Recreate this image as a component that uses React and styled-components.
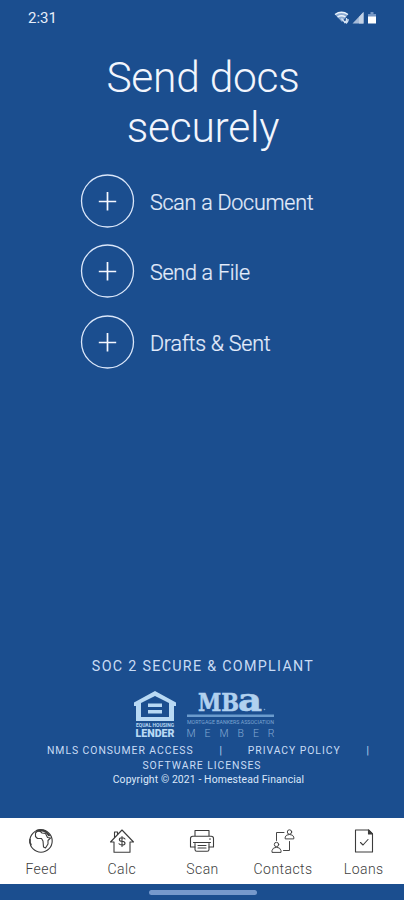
import React from "react";
import styled, { createGlobalStyle } from "styled-components";

const GlobalStyle = createGlobalStyle`
  * { box-sizing: border-box; }
  html, body { margin: 0; padding: 0; background: #1b4e8f; }
  body { font-family: Roboto, "Noto Sans", sans-serif; }
`;

const Screen = styled.div`
  width: 100%;
  max-width: 404px;
  height: 900px;
  display: flex;
  flex-direction: column;
  overflow: hidden;
  background: #1b4e8f;
  color: #f2f5fd;
`;

const StatusBar = styled.header`
  height: 36px;
  flex: none;
  display: flex;
  align-items: center;
  justify-content: space-between;
  padding: 0 25px 0 28px;
`;

const Clock = styled.time`
  font-size: 15px;
  line-height: 18px;
  color: #e6edfa;
`;

const StatusIcons = styled.svg`
  width: 46px;
  height: 16px;
`;

const Title = styled.h1`
  margin: 17px 0 0;
  padding-left: 2px;
  font-size: 42.5px;
  line-height: 50px;
  font-weight: 300;
  text-align: center;
  letter-spacing: -0.25px;
`;

const Actions = styled.nav`
  display: flex;
  flex-direction: column;
  gap: 16px;
  padding: 21px 0 0 80px;
`;

const Action = styled.button`
  display: flex;
  align-items: center;
  gap: 15px;
  height: 54.5px;
  padding: 0;
  border: 0;
  background: none;
  color: #e4ecfb;
  font: 300 21.5px/26px Roboto, sans-serif;
  letter-spacing: -0.25px;
`;

const ActionLabel = styled.span`
  padding-top: 3px;
  -webkit-text-stroke: 0.2px currentColor;
`;

const PlusCircle = styled.svg`
  width: 55px;
  height: 55px;
  flex: none;
`;

const Footer = styled.footer`
  margin-top: auto;
  height: 161px;
  flex: none;
  display: flex;
  flex-direction: column;
  align-items: center;
  color: #c9dcf5;
`;

const Compliance = styled.p`
  margin: 0;
  padding-left: 2px;
  font-size: 14.3px;
  line-height: 18px;
  letter-spacing: 1.3px;
`;

const Logos = styled.div`
  display: flex;
  gap: 11px;
  margin-top: 16px;
  padding-left: 5px;
  height: 50px;
`;

const Links = styled.div`
  display: flex;
  width: 322px;
  margin: 2px 0 0 12px;
  justify-content: space-between;
  font-size: 10px;
  line-height: 15px;
`;

const FooterLink = styled.span`
  font-size: 10.4px;
  line-height: 15px;
  letter-spacing: 0.95px;
`;

const Copyright = styled.p`
  margin: 0;
  padding-left: 13px;
  font-size: 10.4px;
  line-height: 14px;
  letter-spacing: 0.12px;
  color: #dce8fa;
`;

const TabBar = styled.nav`
  height: 66px;
  flex: none;
  display: grid;
  grid-template-columns: repeat(5, 1fr);
  padding-left: 1px;
  background: #fff;
`;

const Tab = styled.a`
  display: flex;
  flex-direction: column;
  align-items: center;
  padding-top: 10px;
  gap: 6px;
  color: #404040;
  font-size: 14px;
  line-height: 18px;
  font-weight: 300;
  letter-spacing: 0.45px;
`;

const TabIcon = styled.svg`
  width: 26px;
  height: 26px;
  fill: none;
  stroke: #3c3c3c;
  stroke-width: 1.1;
  stroke-linejoin: round;
  stroke-linecap: round;
`;

const SystemBar = styled.div`
  height: 16px;
  flex: none;
  display: flex;
  justify-content: center;
  padding: 6px 0 0 2px;
`;

const Handle = styled.div`
  width: 108px;
  height: 5px;
  border-radius: 3px;
  background: #7699cc;
`;

const actions = ["Scan a Document", "Send a File", "Drafts & Sent"];

const tabs = [
  {
    label: "Feed",
    icon: (
      <>
        <circle cx="13" cy="13" r="11.2" />
        <path d="M9.500 3 7.500 5v3.500l2 2h4l1.500 2.500.5 6 2 1 2.500-4v-3.500l2.500-2.500-3-.5-2-4-3.500-.5-1.500-1.500z" />
        <path d="M9 2.600q5.500-1.500 9.500 1.700l2.500 3" strokeWidth="2" />
        <path d="M2 11.500v3l1 2" strokeWidth="1.500" />
      </>
    ),
  },
  {
    label: "Calc",
    icon: (
      <>
        <path d="M5 14v10.200h16V14h3.500L13 2 1.500 14zM5.500 9.500V4h3v2.500" />
        <path d="M16 11q-1-1.200-3-1.200c-3.500 0-3.500 3.300 0 3.500 4 .2 4 3.700 0 3.700q-2.200 0-3-1.200M13 8.500V18.500" />
      </>
    ),
  },
  {
    label: "Scan",
    icon: (
      <>
        <path d="M6 8V2.500h14V8M6 19H1.500v-8.500q0-2.300 2.300-2.300h18.400q2.300 0 2.300 2.300V19H20" />
        <path d="M6 15.500v6q0 1.800 1.800 1.800h10.400q1.800 0 1.800-1.800v-6M4.500 14.500h17M9 17.500h8M9 20h8M20.500 11h1" />
      </>
    ),
  },
  {
    label: "Contacts",
    icon: (
      <g strokeWidth=".95">
        <path d="M6.500 12.500V4.500H14M13.500 22.500h6V13.500" />
        <circle cx="19.500" cy="4" r="2.200" />
        <path d="M15.200 10.500V9q.8-2.500 4.300-2.500t4.300 2.500v1.500z" />
        <circle cx="6.500" cy="16.500" r="2.200" />
        <path d="M2 24v-1.500q.8-3.200 4.500-3.200t4.500 3.200V24z" />
      </g>
    ),
  },
  {
    label: "Loans",
    icon: (
      <>
        <path d="M4.500 2h13l4 4v18h-17z" />
        <path d="M17.500 2v4h4z" fill="#3c3c3c" />
        <path d="M9.500 14.500l2.500 2.500 5-5.500" />
      </>
    ),
  },
];

function LenderLogo() {
  return (
    <svg width="42" height="50" viewBox="0 0 42 50" fill="#b8d9f4">
      <path
        fillRule="evenodd"
        d="M21 0 42 11.500v3.500h-2v15H2V15H0v-3.500zM21 5 7 12v14h28V12z"
      />
      <path d="M14 12.500h14v3.600h-14zM14 19h14v3.600h-14z" />
      <text x="2" y="36" fontSize="4.800" fontWeight="700" textLength="38" lengthAdjust="spacingAndGlyphs">
        EQUAL HOUSING
      </text>
      <text x="1.500" y="45.500" fontSize="10.800" fontWeight="900" textLength="39" lengthAdjust="spacingAndGlyphs">
        LENDER
      </text>
    </svg>
  );
}

function MbaLogo() {
  return (
    <svg width="88" height="50" viewBox="0 0 88 50" fill="#b1d1ef" overflow="visible">
      <g fontFamily="DejaVu Serif, serif" fontWeight="700" stroke="#b1d1ef" strokeWidth=".6">
        <text x="11" y="19.500" fontSize="24.500" textLength="41" lengthAdjust="spacingAndGlyphs">
          MB
        </text>
        <text x="51" y="19.500" fontSize="32" textLength="24" lengthAdjust="spacingAndGlyphs">
          a
        </text>
      </g>
      <circle cx="77.500" cy="18.500" r=".8" fill="#739fcc" />
      <path d="M0 23.500h87v2.600H0z" fill="#6b9bcd" />
      <text x="0" y="33" fontSize="4.500" fill="#7ba5d2" textLength="87" lengthAdjust="spacingAndGlyphs">
        MORTGAGE BANKERS ASSOCIATION
      </text>
      <text x="-.5" y="45.500" fontSize="10.500" fontWeight="300" fill="#83a9d3" textLength="88" lengthAdjust="spacing">
        MEMBER
      </text>
    </svg>
  );
}

export default function App() {
  return (
    <Screen>
      <GlobalStyle />
      <StatusBar>
        <Clock>2:31</Clock>
        <StatusIcons viewBox="0 0 46 16" fill="none">
          <path d="M2 4.500q6.500-5 13 0L9 12z" fill="#8eacd3" />
          <path d="M2 4.500q6.500-4.500 13 0M4.500 7q4-2.700 8 0" stroke="#eaf3fc" strokeWidth="1.500" />
          <path d="M8.500 8.500 12 12.500M11 12.500h1.500M13.500 8v5M12 11l1.500 2 1.500-2M15 9v2" stroke="#d2e1f3" strokeWidth="1.300" />
          <path d="M19.500 13.500 30.500 2v11.500z" fill="#a6bbd9" />
          <path d="M26 7l4.500-5v11.500H26z" fill="#c2d1e5" />
          <path d="M37.500 2h3v2h2.500v3h-8V4h2.500z" fill="#7596c4" />
          <path d="M35 6.500h8v7h-8z" fill="#fff" />
        </StatusIcons>
      </StatusBar>
      <Title>
        Send docs
        <br />
        securely
      </Title>
      <Actions>
        {actions.map((label) => (
          <Action key={label}>
            <PlusCircle viewBox="0 0 55 55" fill="none" stroke="#dbe7fa">
              <circle cx="27.500" cy="27" r="26" strokeWidth="1.300" />
              <path d="M27.500 18v18.500M18.800 27.500h17.400" stroke="#f5f8ff" strokeWidth="1.700" />
            </PlusCircle>
            <ActionLabel>{label}</ActionLabel>
          </Action>
        ))}
      </Actions>
      <Footer>
        <Compliance>SOC 2 SECURE &amp; COMPLIANT</Compliance>
        <Logos>
          <LenderLogo />
          <MbaLogo />
        </Logos>
        <Links>
          <FooterLink>NMLS CONSUMER ACCESS</FooterLink>
          <span>|</span>
          <FooterLink>PRIVACY POLICY</FooterLink>
          <span>|</span>
        </Links>
        <FooterLink>SOFTWARE LICENSES</FooterLink>
        <Copyright>Copyright © 2021 - Homestead Financial</Copyright>
      </Footer>
      <TabBar>
        {tabs.map(({ label, icon }) => (
          <Tab key={label}>
            <TabIcon viewBox="0 0 26 26">{icon}</TabIcon>
            {label}
          </Tab>
        ))}
      </TabBar>
      <SystemBar>
        <Handle />
      </SystemBar>
    </Screen>
  );
}
